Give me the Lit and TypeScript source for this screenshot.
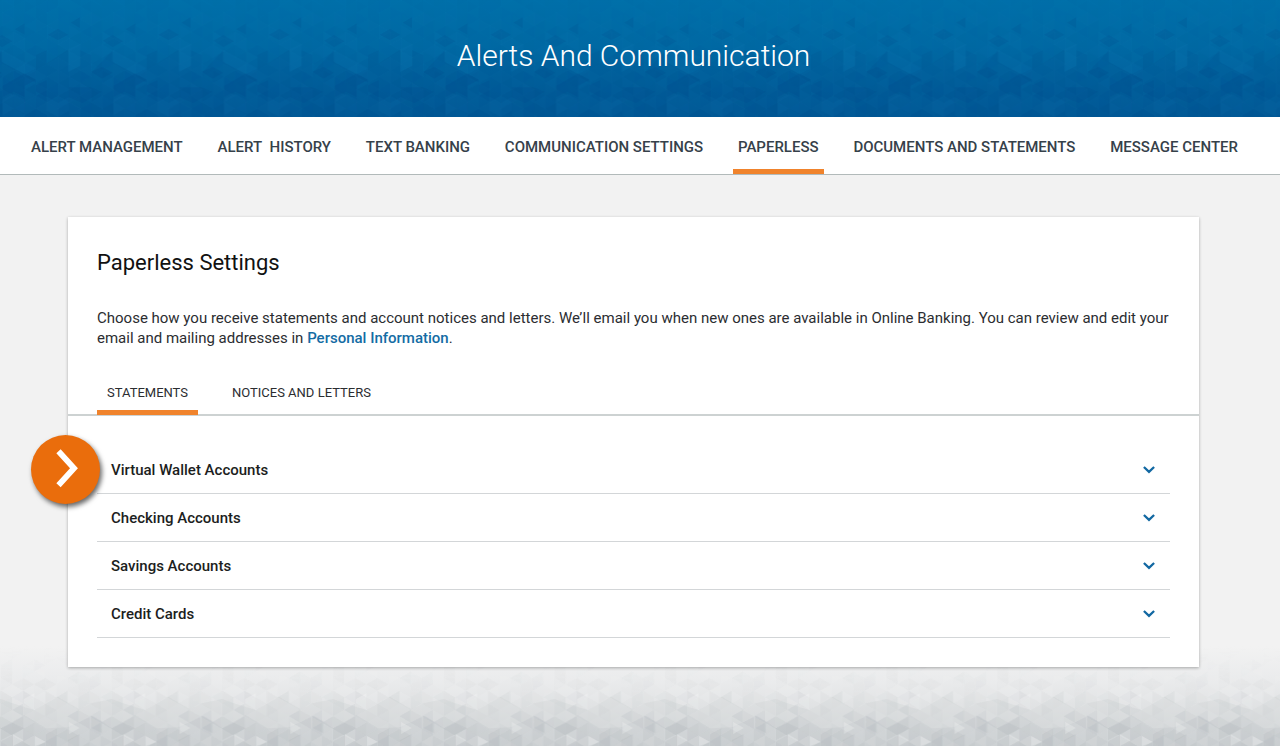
import { LitElement, html, svg, css } from "lit";
import { customElement, property, state } from "lit/decorators.js";
import { classMap } from "lit/directives/class-map.js";

const TILE = 110.7;
const COLUMNS = 10;
const COL = TILE / COLUMNS;
const HALF = COL / Math.sqrt(3);

function noise(i: number, m: number, seed: number): number {
  const v = Math.sin(i * 127.1 + m * 311.7 + seed * 74.7) * 43758.5453;
  return v - Math.floor(v);
}

/** One tile of an isometric triangle mesh, faded in towards the bottom. */
function mesh(height: number, seed: number, light: string, dark: string, strength: number) {
  const out = [];
  const rows = Math.ceil(height / HALF) + 1;
  for (let i = 0; i < COLUMNS; i++) {
    for (let m = -1; m <= rows; m++) {
      const n = noise(i, m, seed);
      const t = Math.min(1, Math.max(0, 0.25 + (m / rows) * 0.9));
      const amount = Math.abs(n - 0.5) * 2 * strength * t;
      const y = m * HALF;
      const left = i * COL;
      const right = left + COL;
      const baseLeft = (m + i) % 2 === 0;
      const bx = baseLeft ? left : right;
      const ax = baseLeft ? right : left;
      out.push(svg`<polygon
        points="${bx.toFixed(2)},${(y - HALF).toFixed(2)} ${bx.toFixed(2)},${(y + HALF).toFixed(2)} ${ax.toFixed(2)},${y.toFixed(2)}"
        fill=${n > 0.5 ? light : dark} fill-opacity=${amount.toFixed(3)}></polygon>`);
    }
  }
  return out;
}

@customElement("mesh-backdrop")
export class MeshBackdrop extends LitElement {
  @property() tone: "blue" | "gray" = "blue";

  static styles = css`
    :host { display: block; overflow: hidden; contain: size; }
    svg { display: block; width: 100%; height: 100%; }
  `;

  private blue() {
    return html`<svg aria-hidden="true">
      <defs>
        <linearGradient id="base" x1="0" y1="0" x2="0" y2="1">
          <stop offset="0" stop-color="#006fa9"></stop>
          <stop offset="0.45" stop-color="#0067a2"></stop>
          <stop offset="1" stop-color="#005896"></stop>
        </linearGradient>
        <pattern id="tile" x="36" y="0" width=${TILE} height="117" patternUnits="userSpaceOnUse">
          ${mesh(117, 3, "#1690c0", "#004583", 0.08)}
          <g transform="scale(0.33333)" fill="#004a8b">
            <path fill-opacity="0.16" d="M0 165 L32 150 V190 L97 148 V215 L132 197 V150 L165 165 V218 L230 150 V185 L298 222 L332 205 V351 H0Z"></path>
            <path fill-opacity="0.2" d="M35 104 L66 86 L97 104 L66 121Z M104 68 L132 51 V85Z M200 122 L230 105 L262 124 L230 142Z M268 88 L298 70 V104Z"></path>
            <path fill-opacity="0.28" d="M232 257 L298 220 L332 240 L298 258 V292 L265 275 L232 292Z M98 262 L165 262 L198 275 L140 310 L98 292Z M0 255 L32 240 V292 L0 275Z M165 215 L198 200 L230 218 L198 236Z"></path>
            <path fill="#1681b6" fill-opacity="0.08" d="M230 150 L332 205 V238 L298 222 L230 185Z M97 148 L132 132 V197 L97 215Z M232 300 L265 282 L298 300 V340 L265 325 L232 345Z M32 290 L66 310 L98 292 V332 L66 350 L32 332Z"></path>
          </g>
        </pattern>
      </defs>
      <rect width="100%" height="100%" fill="url(#base)"></rect>
      <rect width="100%" height="100%" fill="url(#tile)"></rect>
    </svg>`;
  }

  private gray() {
    return html`<svg aria-hidden="true">
      <defs>
        <linearGradient id="base" x1="0" y1="0" x2="0" y2="1">
          <stop offset="0" stop-color="#f2f2f2"></stop>
          <stop offset="0.3" stop-color="#ebeced"></stop>
          <stop offset="1" stop-color="#d5d8da"></stop>
        </linearGradient>
        <pattern id="tile" x="1" y="0" width=${TILE} height="100" patternUnits="userSpaceOnUse">
          ${mesh(100, 11, "#ffffff", "#a9b0b5", 0.17)}
          <g transform="scale(0.33333)" fill="#a3abb1">
            <path fill-opacity="0.12" d="M0 159 L35 172 L100 192 L170 152 L235 190 L270 172 L332 159 V300 H0Z"></path>
            <path fill-opacity="0.13" d="M0 247 L70 207 L135 247 L200 244 L275 209 L305 227 L332 247 V300 H0Z"></path>
            <path fill="#ffffff" fill-opacity="0.22" d="M68 160 L100 142 V192 L68 172Z M102 270 L135 288 L102 300Z M36 265 L68 283 L36 300Z M204 228 L236 246 L204 264Z"></path>
            <path fill-opacity="0.16" d="M0 247 L35 230 L70 247 L35 265 L0 282Z M270 209 L303 227 V262 L270 245Z M135 265 L168 247 V300 H135Z M200 282 L235 264 V300 H200Z"></path>
          </g>
        </pattern>
        <linearGradient id="fade" x1="0" y1="0" x2="0" y2="1">
          <stop offset="0" stop-color="#000"></stop>
          <stop offset="0.25" stop-color="#aaa"></stop>
          <stop offset="0.5" stop-color="#fff"></stop>
        </linearGradient>
        <mask id="mask"><rect width="100%" height="100%" fill="url(#fade)"></rect></mask>
      </defs>
      <rect width="100%" height="100%" fill="url(#base)"></rect>
      <rect width="100%" height="100%" fill="url(#tile)" mask="url(#mask)"></rect>
    </svg>`;
  }

  render() {
    return this.tone === "blue" ? this.blue() : this.gray();
  }
}

@customElement("app-root")
export class AppRoot extends LitElement {
  @state() private section = "PAPERLESS";
  @state() private tab = "STATEMENTS";
  @state() private open = "";

  private sections = [
    "ALERT MANAGEMENT",
    "ALERT\u00a0 HISTORY",
    "TEXT BANKING",
    "COMMUNICATION SETTINGS",
    "PAPERLESS",
    "DOCUMENTS AND STATEMENTS",
    "MESSAGE CENTER",
  ];
  private tabs = ["STATEMENTS", "NOTICES AND LETTERS"];
  private accounts = ["Virtual Wallet Accounts", "Checking Accounts", "Savings Accounts", "Credit Cards"];

  static styles = css`
    :host {
      display: flex;
      flex-direction: column;
      min-height: 100vh;
      background: #f2f2f2;
      color: #2b2d31;
      font-family: Roboto, "Liberation Sans", sans-serif;
      font-size: 15px;
      line-height: 20px;
    }
    * { box-sizing: border-box; }
    h1, h2, h3, p { margin: 0; padding: 0; font-weight: 400; }
    button { margin: 0; border: 0; padding: 0; background: none; color: inherit; font: inherit; cursor: pointer; }

    .banner { display: grid; }
    .banner > * { grid-area: 1 / 1; }
    .banner h1 {
      z-index: 1;
      padding: 38px 13px 43px 0;
      color: #fff;
      font-size: 30px;
      font-weight: 300;
      line-height: 36px;
      text-align: center;
    }

    .nav {
      display: flex;
      justify-content: space-between;
      padding: 0 37px 0 26px;
      background: #fff;
      border-bottom: 1px solid #b2baba;
    }
    .nav a {
      padding: 20px 5px 12px;
      border-bottom: 5px solid transparent;
      color: #36414a;
      font-weight: 500;
      text-decoration: none;
      white-space: nowrap;
    }
    .nav a.current { border-color: #f0832c; }

    .main { display: grid; flex: 1; }
    .main > * { grid-area: 1 / 1; }
    .ground { align-self: end; height: 100px; }
    .card {
      z-index: 1;
      align-self: start;
      position: relative;
      margin: 42px 81px 79px 68px;
      padding: 32px 0 29px;
      background: #fff;
      box-shadow: 0 1px 3px rgba(0, 0, 0, 0.3);
    }
    .card h2 { padding: 0 29px; color: #111; font-size: 22px; line-height: 28px; }
    .intro { padding: 31px 29px 28px; }
    .intro a { color: #146ca4; font-weight: 500; text-decoration: none; }

    .tabs { display: flex; gap: 24px; padding: 0 29px; border-bottom: 2px solid #cdd2d2; }
    .tabs button {
      margin-bottom: -1px;
      padding: 9px 10px 9px;
      border-bottom: 5px solid transparent;
      font-size: 13px;
      line-height: 16px;
    }
    .tabs button.current { border-color: #f0832c; }

    .accounts { padding: 30px 29px 0; }
    .accounts h3 { border-bottom: 1px solid #d3d6d8; font-size: 15px; }
    .accounts button {
      display: flex;
      align-items: center;
      justify-content: space-between;
      width: 100%;
      padding: 14px 15px 13px 14px;
      color: #1c1e21;
      font-weight: 500;
      text-align: left;
    }
    .arrow { display: block; width: 12px; height: 8px; }
    .arrow.up { transform: rotate(180deg); }

    .panel { position: relative; }
    .marker {
      position: absolute;
      top: 19px;
      left: -37px;
      width: 69px;
      height: 69px;
      border-radius: 50%;
      background: #ea6d0c;
      box-shadow: 2px 3px 5px rgba(0, 0, 0, 0.6);
    }
    .marker svg { display: block; width: 100%; height: 100%; }
  `;

  render() {
    return html`
      <header class="banner">
        <mesh-backdrop tone="blue"></mesh-backdrop>
        <h1>Alerts And Communication</h1>
      </header>
      <nav class="nav" aria-label="Alerts and communication">
        ${this.sections.map(
          (s) => html`<a
            href="#"
            class=${classMap({ current: s === this.section })}
            @click=${(e: Event) => { e.preventDefault(); this.section = s; }}
          >${s}</a>`
        )}
      </nav>
      <main class="main">
        <mesh-backdrop class="ground" tone="gray"></mesh-backdrop>
        <section class="card">
          <h2>Paperless Settings</h2>
          <p class="intro">Choose how you receive statements and account notices and letters. We’ll email you when new ones are available in Online Banking. You can review and edit your email and mailing addresses in <a href="#">Personal Information</a>.</p>
          <div class="tabs" role="tablist">
            ${this.tabs.map(
              (t) => html`<button
                role="tab"
                aria-selected=${t === this.tab}
                class=${classMap({ current: t === this.tab })}
                @click=${() => (this.tab = t)}
              >${t}</button>`
            )}
          </div>
          <div class="panel" role="tabpanel">
            <div class="accounts">
              ${this.accounts.map(
                (a) => html`<h3><button
                  aria-expanded=${a === this.open}
                  @click=${() => (this.open = a === this.open ? "" : a)}
                >${a}<svg class=${classMap({ arrow: true, up: a === this.open })} viewBox="0 0 12 8" aria-hidden="true">
                  <path d="M0.9 1 L6 5.8 L11.1 1" fill="none" stroke="#1268a2" stroke-width="2.3"></path>
                </svg></button></h3>`
              )}
            </div>
            <button class="marker" aria-label="Next">
              <svg viewBox="0 0 69 69" aria-hidden="true">
                <path d="M27.5 16.3 L43 33.2 L27.5 50.2" fill="none" stroke="#fff" stroke-width="5.8"></path>
              </svg>
            </button>
          </div>
        </section>
      </main>
    `;
  }
}
